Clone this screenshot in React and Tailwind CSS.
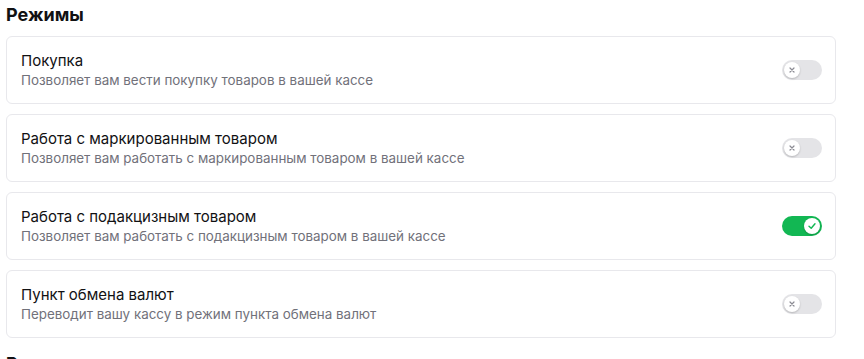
import React from "react";

const items = [
  { title: "Покупка", desc: "Позволяет вам вести покупку товаров в вашей кассе", on: false },
  { title: "Работа с маркированным товаром", desc: "Позволяет вам работать с маркированным товаром в вашей кассе", on: false },
  { title: "Работа с подакцизным товаром", desc: "Позволяет вам работать с подакцизным товаром в вашей кассе", on: true },
  { title: "Пункт обмена валют", desc: "Переводит вашу кассу в режим пункта обмена валют", on: false },
];

function Toggle({ on }) {
  return (
    <div
      className={`flex h-[20px] w-[40px] items-center rounded-full p-[2px] ${
        on ? "justify-end bg-[#12b753]" : "justify-start bg-[#e4e4e7]"
      }`}
    >
      <div className="flex h-[16px] w-[16px] items-center justify-center rounded-full bg-white shadow-[0_1px_2px_rgba(0,0,0,0.2)]">
        {on ? (
          <svg width="10" height="10" viewBox="0 0 10 10" fill="none">
            <path d="M2 5.2 L4.2 7.3 L8 2.8" stroke="#12b753" strokeWidth="1.4" strokeLinecap="round" strokeLinejoin="round" />
          </svg>
        ) : (
          <svg width="8" height="8" viewBox="0 0 8 8" fill="none">
            <path d="M2 2 L6 6 M6 2 L2 6" stroke="#8b8b93" strokeWidth="1.2" strokeLinecap="round" />
          </svg>
        )}
      </div>
    </div>
  );
}

export default function App() {
  return (
    <div className="bg-white pl-[6px] pt-[2px] text-[#111113]" style={{ fontFamily: "Inter, 'Noto Sans', sans-serif" }}>
      <h2 className="text-[18px] font-bold leading-[26px]">Режимы</h2>
      <div className="mt-[8px] flex w-[830px] flex-col gap-[10px]">
        {items.map((it) => (
          <div
            key={it.title}
            className="flex h-[68px] items-center justify-between rounded-[6px] border border-[#e8e8ec] pl-[14px] pr-[13px]"
          >
            <div className="flex flex-col">
              <div className="text-[15px] leading-[21px]">{it.title}</div>
              <div className="text-[13.4px] leading-[19px] text-[#71717a]">{it.desc}</div>
            </div>
            <Toggle on={it.on} />
          </div>
        ))}
      </div>
      <h2 className="mt-[13px] text-[18px] font-bold leading-[26px]">Разрешения</h2>
    </div>
  );
}
